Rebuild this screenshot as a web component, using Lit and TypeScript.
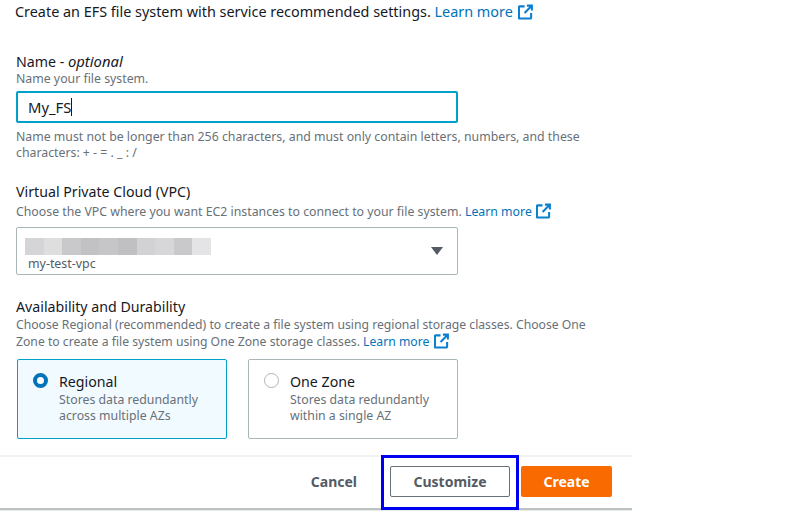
import { LitElement, html, css, svg } from "lit";
import { customElement } from "lit/decorators.js";

const externalIcon = svg`<path d="M7 2H2a1 1 0 0 0-1 1v11a1 1 0 0 0 1 1h11a1 1 0 0 0 1-1V9" fill="none" stroke="currentColor" stroke-width="2.2"/><path d="M9.5 1.2h5.3v5.3M14.6 1.4 7 9" fill="none" stroke="currentColor" stroke-width="2.2"/>`;

const blurShades = [
  "#d5d4d6", "#dfdedf", "#c9c8ca", "#c2c1c3", "#c6c5c7", "#c0bfc1",
  "#d2d1d3", "#d7d6d8", "#c9c8ca", "#e4e4e6",
];

@customElement("app-root")
export class AppRoot extends LitElement {
  static override styles = css`
    :host {
      display: block;
      position: relative;
      width: 797px;
      height: 518px;
      overflow: hidden;
      background: #fff;
      color: #16191f;
      font-family: "Noto Sans", "Liberation Sans", sans-serif;
      font-size: 14.2px;
    }
    .panel {
      width: 632px;
      display: flex;
      flex-direction: column;
    }
    .intro {
      padding: 2px 0 0 15px;
      line-height: 20px;
      height: 50px;
      font-size: 14.4px;
    }
    a {
      color: #0073bb;
      text-decoration: none;
    }
    .ext {
      width: 15px;
      height: 16px;
      vertical-align: -3px;
      margin-left: 1px;
      color: #0a7fd0;
    }
    .field {
      padding-left: 16px;
      width: 442px;
    }
    .vpc-field {
      margin-top: 22px;
    }
    .vpc-field .hint {
      margin-top: 2px;
    }
    .az-field {
      margin-top: 23px;
    }
    .az-field > .hint {
      margin-top: 1px;
      font-size: 12.2px;
    }
    .wide {
      width: 590px;
    }
    .label {
      line-height: 18px;
    }
    .label i {
      font-size: 14.8px;
    }
    .hint {
      color: #687078;
      font-size: 12.3px;
      line-height: 16px;
    }
    .input {
      box-sizing: border-box;
      height: 32px;
      margin: 4px 0 6px;
      padding: 0 10px;
      width: 442px;
      border: 2px solid #00a1c9;
      border-radius: 2px;
      display: flex;
      align-items: center;
      font-size: 14.8px;
    }
    .caret {
      width: 1px;
      height: 18px;
      background: #16191f;
    }
    .select {
      box-sizing: border-box;
      height: 48px;
      width: 442px;
      margin-top: 7px;
      padding: 0 14px 0 8px;
      border: 1px solid #aab7b8;
      border-radius: 2px;
      display: flex;
      align-items: center;
      justify-content: space-between;
    }
    .value {
      margin-top: 8px;
    }
    .blur {
      display: flex;
      height: 17px;
      width: 186px;
    }
    .blur span {
      flex: 1;
    }
    .vpc {
      color: #545b64;
      font-size: 12.4px;
      line-height: 16px;
      padding: 1px 0 0 3px;
    }
    .arrow {
      width: 0;
      height: 0;
      border-left: 6px solid transparent;
      border-right: 6px solid transparent;
      border-top: 8px solid #545b64;
    }
    .cards {
      display: flex;
      gap: 21px;
      margin-top: 9px;
      padding-left: 1px;
    }
    .card {
      box-sizing: border-box;
      width: 210px;
      height: 80px;
      padding: 13px 10px 0 15px;
      border: 1px solid #aab7b8;
      border-radius: 2px;
      display: flex;
      gap: 11px;
    }
    .card.on {
      border-color: #00a1c9;
      background: #f1faff;
    }
    .card .hint {
      margin-top: 1px;
    }
    .radio {
      box-sizing: border-box;
      flex: none;
      width: 15px;
      height: 15px;
      border-radius: 50%;
      border: 1px solid #aab7b8;
      background: #fff;
    }
    .on .radio {
      border: 4px solid #0073bb;
    }
    .footer {
      box-sizing: border-box;
      height: 55px;
      margin-top: 16px;
      padding: 0 20px 2px 0;
      border-top: 2px solid #f2f3f3;
      border-bottom: 2px solid #bcc2c2;
      box-shadow: 0 1px 0 #e6eaea;
      display: flex;
      align-items: center;
      justify-content: flex-end;
      font-weight: 700;
      font-size: 14px;
    }
    .cancel {
      color: #545b64;
      margin-right: 33px;
    }
    .btn {
      box-sizing: border-box;
      height: 31px;
      border-radius: 2px;
      display: flex;
      align-items: center;
      justify-content: center;
    }
    .custom {
      width: 120px;
      border: 1px solid #687078;
      color: #545b64;
      margin-right: 11px;
    }
    .create {
      width: 91px;
      background: #f96a00;
      color: #fff;
    }
    .mark {
      position: absolute;
      left: 381px;
      top: 455px;
      width: 138px;
      height: 55px;
      box-sizing: border-box;
      border: 3px solid #0000f0;
    }
  `;

  override render() {
    const ext = html`<svg class="ext" viewBox="0 0 16 16">${externalIcon}</svg>`;
    return html`<div class="panel">
        <div class="intro">
          Create an EFS file system with service recommended settings.
          <a>Learn more</a> ${ext}
        </div>
        <div class="field">
          <div class="label">Name - <i>optional</i></div>
          <div class="hint">Name your file system.</div>
          <div class="input">My_FS<span class="caret"></span></div>
          <div class="hint wide">
            Name must not be longer than 256 characters, and must only contain
            letters, numbers, and these characters: + - = . _ : /
          </div>
        </div>
        <div class="field vpc-field">
          <div class="label">Virtual Private Cloud (VPC)</div>
          <div class="hint wide">
            Choose the VPC where you want EC2 instances to connect to your file
            system. <a>Learn more</a> ${ext}
          </div>
          <div class="select">
            <div class="value">
              <div class="blur">
                ${blurShades.map(
                  (c) => html`<span style="background:${c}"></span>`
                )}
              </div>
              <div class="vpc">my-test-vpc</div>
            </div>
            <div class="arrow"></div>
          </div>
        </div>
        <div class="field az-field">
          <div class="label">Availability and Durability</div>
          <div class="hint wide">
            Choose Regional (recommended) to create a file system using regional
            storage classes. Choose One Zone to create a file system using One
            Zone storage classes. <a>Learn more</a> ${ext}
          </div>
          <div class="cards">
            <div class="card on">
              <div class="radio"></div>
              <div>
                <div class="label">Regional</div>
                <div class="hint">Stores data redundantly<br />across multiple AZs</div>
              </div>
            </div>
            <div class="card">
              <div class="radio"></div>
              <div>
                <div class="label">One Zone</div>
                <div class="hint">Stores data redundantly<br />within a single AZ</div>
              </div>
            </div>
          </div>
        </div>
        <div class="footer">
          <span class="cancel">Cancel</span>
          <div class="btn custom">Customize</div>
          <div class="btn create">Create</div>
        </div>
      </div>
      <div class="mark"></div>`;
  }
}
